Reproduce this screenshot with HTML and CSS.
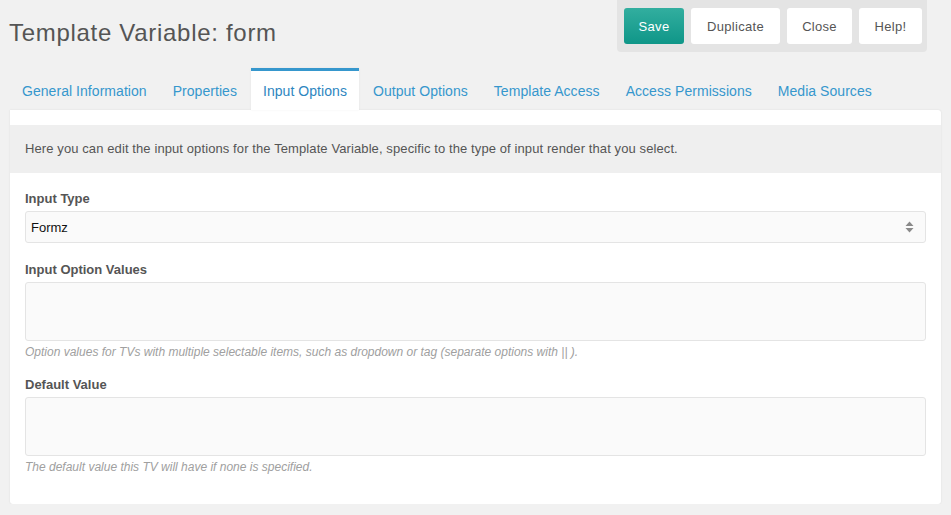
FILE: index.html
```html
<!DOCTYPE html>
<html>
<head>
<meta charset="utf-8">
<link rel="stylesheet" href="styles.css">
</head>
<body>
<div class="page">
  <div class="header">
    <h1 class="title">Template Variable: form</h1>
    <div class="actions">
      <button class="btn btn-primary">Save</button>
      <button class="btn">Duplicate</button>
      <button class="btn">Close</button>
      <button class="btn">Help!</button>
    </div>
  </div>
  <ul class="tabs">
    <li class="tab">General Information</li>
    <li class="tab">Properties</li>
    <li class="tab active">Input Options</li>
    <li class="tab">Output Options</li>
    <li class="tab">Template Access</li>
    <li class="tab">Access Permissions</li>
    <li class="tab">Media Sources</li>
  </ul>
  <div class="panel">
    <div class="desc">Here you can edit the input options for the Template Variable, specific to the type of input render that you select.</div>
    <div class="form">
      <div class="field field-select">
        <label class="label">Input Type</label>
        <div class="select">
          <span>Formz</span>
          <svg class="arrows" width="9" height="12" viewBox="0 0 9 12"><path d="M4.5 0.5 L8.5 5 L0.5 5 Z M4.5 11.5 L8.5 7 L0.5 7 Z" fill="#8a8a8a"/></svg>
        </div>
      </div>
      <div class="field">
        <label class="label">Input Option Values</label>
        <div class="textarea"></div>
        <div class="help">Option values for TVs with multiple selectable items, such as dropdown or tag (separate options with || ).</div>
      </div>
      <div class="field field-last">
        <label class="label">Default Value</label>
        <div class="textarea"></div>
        <div class="help">The default value this TV will have if none is specified.</div>
      </div>
    </div>
  </div>
</div>
</body>
</html>
```
FILE: styles.css
```css
html, body {
  margin: 0;
  padding: 0;
  background: #f1f1f1;
  font-family: "Liberation Sans", Arial, sans-serif;
  color: #555;
}
.page {
  padding: 0 10px;
}
.header {
  display: flex;
  justify-content: space-between;
  align-items: flex-start;
  height: 68px;
}
.title {
  margin: 19px 0 0 -1px;
  font-size: 24px;
  font-weight: normal;
  color: #555;
  line-height: 28px;
  letter-spacing: 0.7px;
}
.actions {
  display: flex;
  gap: 7px;
  background: #e4e4e4;
  padding: 8px 5px 8px 7px;
  border-radius: 0 0 4px 4px;
  margin-right: 14px;
}
.btn {
  height: 36px;
  border: none;
  border-radius: 3px;
  background: #fff;
  color: #555;
  font-family: "Liberation Sans", Arial, sans-serif;
  font-size: 13px;
  letter-spacing: 0.3px;
  padding: 0;
}
.btn-primary {
  background: linear-gradient(#32ae9f, #0f9688);
  color: #fff;
  width: 60px;
}
.btn:nth-child(2) { width: 89px; }
.btn:nth-child(3) { width: 65px; }
.btn:nth-child(4) { width: 63px; }
.tabs {
  list-style: none;
  margin: 0;
  padding: 0;
  display: flex;
  height: 42px;
}
.tab {
  padding: 0 12px;
  margin-right: 2px;
  color: #3697cd;
  font-size: 14px;
  letter-spacing: 0.05px;
  line-height: 40px;
  border-top: 3px solid transparent;
}
.tab.active {
  background: #fff;
  border-top-color: #3697cd;
  color: #2e86bf;
  box-shadow: 0 0 2px rgba(0,0,0,0.06);
}
.panel {
  background: #fff;
  border-radius: 0 3px 3px 3px;
  box-shadow: 0 0 2px rgba(0,0,0,0.1);
  padding: 15px 0 29px 0;
}
.desc {
  background: #efefef;
  font-size: 13px;
  letter-spacing: 0.1px;
  padding: 0 15px;
  line-height: 48px;
  color: #555;
}
.form {
  padding: 18px 15px 0 15px;
}
.field {
  margin-bottom: 17px;
}
.field-select {
  margin-bottom: 19px;
}
.field-last {
  margin-bottom: 0;
}
.label {
  display: block;
  font-size: 13px;
  font-weight: bold;
  color: #555;
  line-height: 16px;
  margin-bottom: 4px;
}
.select {
  height: 30px;
  background: #fafafa;
  border: 1px solid #e4e4e4;
  border-radius: 3px;
  display: flex;
  align-items: center;
  justify-content: space-between;
  padding: 0 11px 0 5px;
  font-size: 13px;
  color: #111;
}
.textarea {
  height: 57px;
  background: #fafafa;
  border: 1px solid #e4e4e4;
  border-radius: 3px;
}
.help {
  font-size: 12px;
  font-style: italic;
  color: #a0a0a0;
  margin-top: 3px;
  line-height: 16px;
}
```
